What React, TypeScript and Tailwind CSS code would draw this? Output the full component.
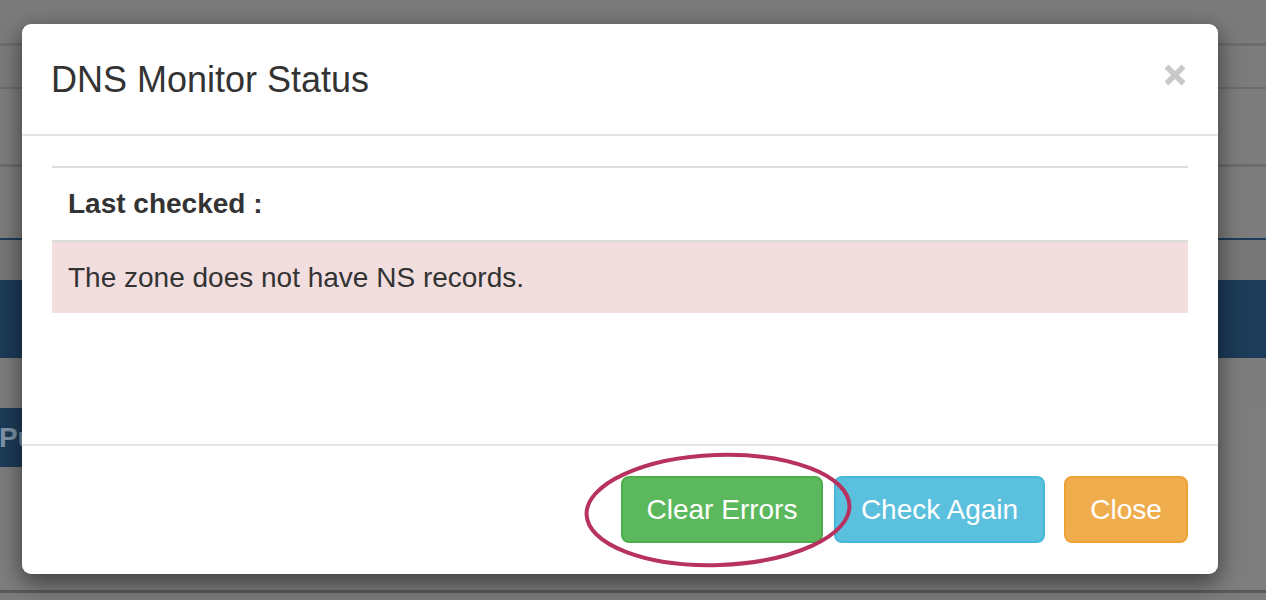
import React from "react";

const font = { fontFamily: '"Liberation Sans", Arial, Helvetica, sans-serif' };

function Background() {
  return (
    <div className="flex flex-col w-full h-full">
      <div className="h-[43px] bg-[#7b7b7b]" />
      <div className="h-[3px] bg-[#6d6d6d]" />
      <div className="h-[41px] bg-[#7c7c7c]" />
      <div className="h-[2px] bg-[#6d6d6d]" />
      <div className="h-[75px] bg-[#7d7d7d]" />
      <div className="h-[3px] bg-[#6c6c6c]" />
      <div className="h-[71px] bg-[#7d7d7d]" />
      <div className="h-[2px] bg-[#1d3d5a]" />
      <div className="h-[40px] bg-[#777777]" />
      <div className="h-[78px] bg-[#1d3c59]" />
      <div className="h-[50px] bg-[#7d7d7d]" />
      <div className="h-[59px] bg-[#7e7e7e] flex">
        <div className="w-[60px] h-full bg-[#1d3c59] flex items-center text-[28px] font-bold text-[#7f93a8] -ml-[1px]">
          Pu
        </div>
      </div>
      <div className="h-[123px] bg-[#7e7e7e]" />
      <div className="h-[3px] bg-[#5a5a5a]" />
      <div className="flex-1 bg-[#7c7c7c]" />
    </div>
  );
}

function CloseX() {
  return (
    <svg width="22" height="22" viewBox="0 0 22 22">
      <path d="M2.5 2.5 L19.5 19.5 M19.5 2.5 L2.5 19.5" stroke="#c8c8c8" strokeWidth="5.5" strokeLinecap="butt" />
    </svg>
  );
}

export default function App() {
  return (
    <div className="relative w-[1266px] h-[600px] overflow-hidden bg-[#7d7d7d]" style={font}>
      <Background />

      <div className="absolute left-[22px] top-[24px] w-[1196px] h-[550px] bg-white rounded-[9px] shadow-[0_8px_24px_rgba(0,0,0,0.55)] flex flex-col text-[#333333]">
        <div className="h-[112px] border-b-2 border-[#e5e5e5] flex items-center justify-between pl-[29px] pr-[32px] pt-[2px]">
          <h4 className="text-[36px] leading-[48px] font-normal">DNS Monitor Status</h4>
          <div className="-mt-[10px]">
            <CloseX />
          </div>
        </div>

        <div className="h-[308px] px-[30px] pt-[30px]">
          <div className="border-t-2 border-[#dddddd]">
            <div className="pl-[16px] pr-[16px] pt-[16px] pb-[16px] text-[28px] leading-[40px] font-bold">
              Last checked :
            </div>
            <div className="border-t-2 border-[#dddddd] bg-[#f2dede] px-[16px] pt-[16px] pb-[15px] text-[28px] leading-[40px]">
              The zone does not have NS records.
            </div>
          </div>
        </div>

        <div className="flex-1 border-t-2 border-[#e5e5e5] flex justify-end items-start pt-[30px] pr-[30px]">
          <button className="w-[202px] h-[67px] rounded-[8px] border-2 border-[#4cae4c] bg-[#5cb85c] text-white text-[28px] leading-none">
            Clear Errors
          </button>
          <button className="ml-[11px] w-[211px] h-[67px] rounded-[8px] border-2 border-[#46b8da] bg-[#5bc0de] text-white text-[28px] leading-none">
            Check Again
          </button>
          <button className="ml-[19px] w-[124px] h-[67px] rounded-[8px] border-2 border-[#eea236] bg-[#f0ad4e] text-white text-[28px] leading-none">
            Close
          </button>
        </div>
      </div>

      <svg className="absolute left-[575px] top-[444px]" width="290" height="132" viewBox="0 0 290 132">
        <ellipse cx="143" cy="66" rx="131.5" ry="55" fill="none" stroke="#b7325f" strokeWidth="4" transform="rotate(-2 143 66)" />
      </svg>
    </div>
  );
}
